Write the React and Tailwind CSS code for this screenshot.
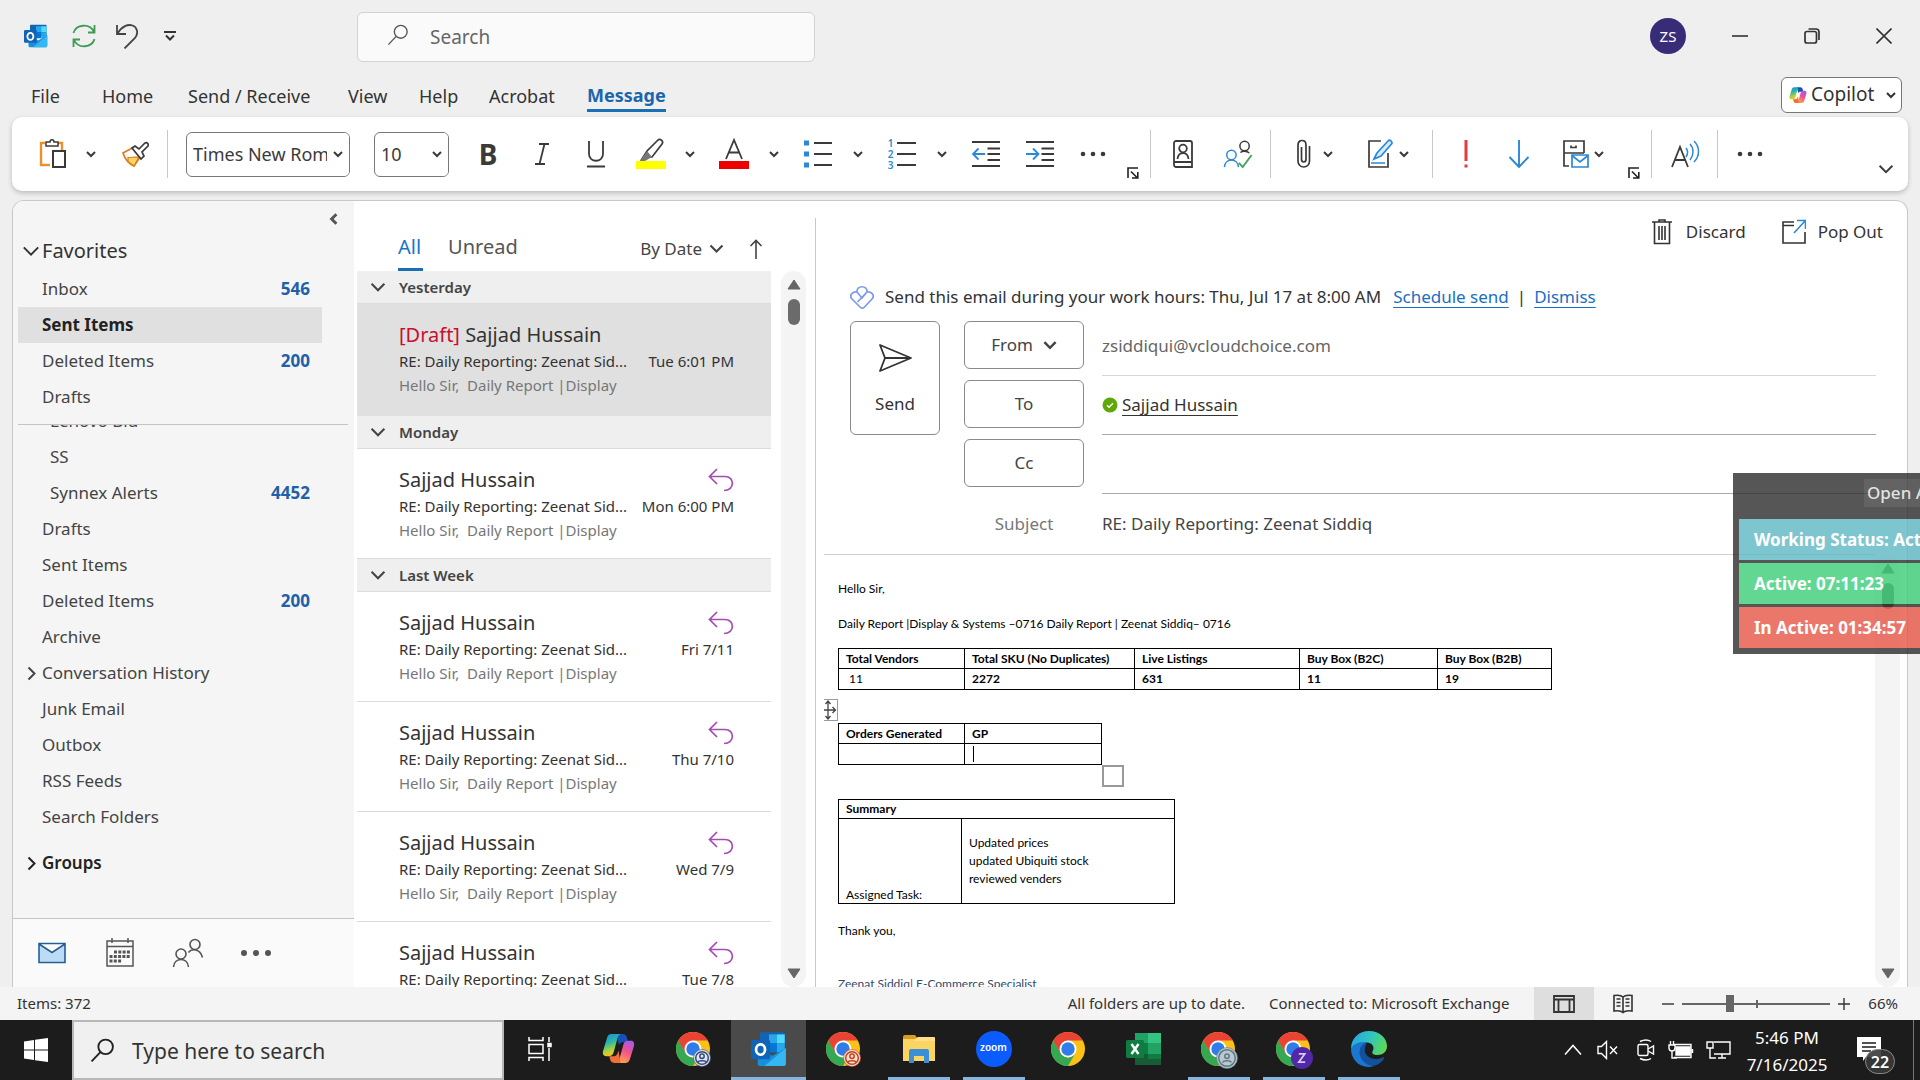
import React from "react";

/* ---------- shared icons ---------- */
const Svg = ({ w = 28, h, box, children, className = "", sw = 1.5 }) => (
  <svg
    width={w}
    height={h ?? w}
    viewBox={box ?? `0 0 ${w} ${h ?? w}`}
    fill="none"
    stroke="currentColor"
    strokeWidth={sw}
    aria-hidden="true"
    className={"shrink-0 " + className}
  >
    {children}
  </svg>
);

const Chevron = ({ w = 10, sw = 2, className = "" }) => (
  <Svg w={w} h={w} box="0 0 10 10" sw={sw} className={className}>
    <path d="M1 3l4 4 4-4" />
  </Svg>
);

const Magnifier = ({ w = 24, sw = 1.5, className = "" }) => (
  <Svg w={w} box="0 0 24 24" sw={sw} className={className}>
    <circle cx="15" cy="8.500" r="7" />
    <path d="M10 13.500L1.500 22.500" />
  </Svg>
);

const Outlook = ({ w }) => (
  <Svg w={w} box="0 0 32 32" sw={0}>
    <path fill="#1066b5" d="M9 1h20a1 1 0 0 1 1 1v14H8V2a1 1 0 0 1 1-1z" />
    <path fill="#28a8ea" d="M16 3h7v8h-7z" />
    <path fill="#50d9ff" d="M23 3h7v8h-7z" />
    <path fill="#0078d4" d="M16 11h7v8h-7z" />
    <path fill="#28a8ea" d="M23 11h7v8h-7z" />
    <path fill="#1490df" d="M6 16l13 6 12-7v14a2 2 0 0 1-2 2H8a2 2 0 0 1-2-2z" />
    <path fill="#35b8f1" d="M31 15v14a2 2 0 0 1-2 2H12z" />
    <rect x="0" y="8" width="17" height="17" rx="1.500" fill="#0f64b8" />
    <ellipse cx="8.500" cy="16.500" rx="4" ry="4.600" stroke="#fff" strokeWidth="2.400" />
  </Svg>
);

const CopilotLogo = ({ w }) => (
  <Svg w={w} box="0 0 32 32" sw={0}>
    <defs>
      <linearGradient id="cpA" x1="0" y1="0" x2="0.3" y2="1">
        <stop offset="0" stopColor="#1a8ae8" />
        <stop offset="0.45" stopColor="#2bb8a5" />
        <stop offset="0.8" stopColor="#b5d334" />
        <stop offset="1" stopColor="#f5c026" />
      </linearGradient>
      <linearGradient id="cpB" x1="0.7" y1="0" x2="0.3" y2="1">
        <stop offset="0" stopColor="#a55be8" />
        <stop offset="0.45" stopColor="#f0508f" />
        <stop offset="1" stopColor="#ffa34d" />
      </linearGradient>
    </defs>
    <path fill="#1650b8" d="M14 2h6c2.500 0 3.500 1.500 4 3l1.500 5H20c-2 0-3 1-3.500 3z" />
    <path
      fill="url(#cpA)"
      d="M9 2h9c-2 1-2.800 3-3.500 6l-3 11c-.8 3-2 4.500-4.500 4.500H4C1.500 23.500.3 21.500 1 18.500L4.500 7C5.500 3.500 6.500 2 9 2z"
    />
    <path
      fill="url(#cpB)"
      d="M23 30h-9c2-1 2.800-3 3.500-6l3-11c.8-3 2-4.500 4.500-4.500h3c2.500 0 3.700 2 3 5L27.500 25c-1 3.500-2 5-4.500 5z"
    />
    <path fill="#f0703c" d="M18 30h-6c-2.500 0-3.500-1.500-4-3l-1-3.500h3.500c2.500 0 4-1 4.800-3.500l.7-2z" />
  </Svg>
);

const Chrome = ({ children }) => (
  <Svg w={40} box="0 0 40 40" sw={0}>
    <circle cx="19" cy="20" r="17" fill="#fbc116" />
    <path fill="#ea4335" d="M4.280 11.500A17 17 0 0 1 33.720 11.500H19L11.640 24.250z" />
    <path fill="#34a853" d="M4.280 11.500A17 17 0 0 0 19 37L26.360 24.250A8.500 8.500 0 0 1 11.640 24.250z" />
    <path fill="#ea4335" d="M4.280 11.500L11.640 24.250L12 15L19 11.500z" />
    <circle cx="19" cy="20" r="8.500" fill="#fff" />
    <circle cx="19" cy="20" r="6.700" fill="#2f7de9" />
    {children}
  </Svg>
);

const PersonBadge = ({ bg, fg, r = 8.5 }) => (
  <g>
    <circle cx="28" cy="29" r={r} fill={bg} stroke={fg} strokeWidth="0.6" />
    <circle cx="28" cy="29" r={r - 2.2} stroke={fg} strokeWidth="1.500" />
    <circle cx="28" cy="27.200" r="2.200" stroke={fg} strokeWidth="1.500" />
    <path d="M23.800 33.500c.7-2.400 7.700-2.400 8.400 0" stroke={fg} strokeWidth="1.500" />
  </g>
);

const People = ({ w = 32, check }) => (
  <Svg w={w} box="0 0 32 32" sw={1.6}>
    <circle cx="23" cy="7.500" r="5" />
    {!check && <path d="M16.500 15.500c3-4 11.500-4.500 14 5" />}
    {check && <path d="M18.500 14.500c2-2 7-2.200 9.500.5" />}
    <g stroke={check ? "#2b88d8" : "currentColor"}>
      <circle cx="9" cy="17" r="5" />
      <path d="M1.500 30c.8-10 14.200-10 15 0" />
    </g>
    {check && <path d="M17 25.500l4 4.500 9.500-13" stroke="#3fa35a" strokeWidth="2" />}
  </Svg>
);

const Dots = ({ className = "", r = 2.3 }) => (
  <Svg w={28} h={8} sw={0} className={className}>
    <g fill="currentColor">
      <circle cx="4" cy="4" r={r} />
      <circle cx="14" cy="4" r={r} />
      <circle cx="24" cy="4" r={r} />
    </g>
  </Svg>
);

/* ---------- ribbon ---------- */
const Tool = ({ label, className, children }) => (
  <button
    type="button"
    aria-label={label}
    className={"flex h-12 shrink-0 items-center justify-center " + className}
  >
    {children}
  </button>
);
const Divider = ({ className }) => <div className={"h-12 w-px shrink-0 bg-[#c8c8c8] " + className} />;

const Launcher = ({ className }) => (
  <button
    type="button"
    aria-label="More settings"
    className={"flex w-4 shrink-0 justify-center self-end pb-3 text-[#222] " + className}
  >
    <Svg w={12} h={12} sw={1.6}>
      <path d="M1 11V1h10M4 4.500l6 6M10.800 5v6H5" />
    </Svg>
  </button>
);

const Combo = ({ label, value, className }) => (
  <div className={"relative h-[45px] shrink-0 overflow-hidden rounded-md border border-[#777] bg-white " + className}>
    <select
      aria-label={label}
      defaultValue={value}
      className="h-full w-full appearance-none bg-transparent pt-px outline-none"
    >
      <option>{value}</option>
    </select>
    <div className="pointer-events-none absolute inset-y-0 right-0 flex w-[22px] items-center justify-end bg-white">
      <Chevron className="mr-1.5" />
    </div>
  </div>
);

const Outdent = ({ flip }) => (
  <Svg w={28} sw={1.8}>
    <path d="M0 2h28M15.500 8.500H28M15.500 14H28M15.500 20H28M0 26h28" />
    {flip ? (
      <path d="M0 14h12M7 8.500l5.500 5.500L7 19.500" stroke="#2b88d8" />
    ) : (
      <path d="M13 14H1M6.500 8.500L1 14l5.500 5.500" stroke="#2b88d8" />
    )}
  </Svg>
);

function Ribbon() {
  return (
    <div
      role="toolbar"
      aria-label="Message ribbon"
      className="mx-3 flex h-[74px] shrink-0 items-center rounded-[10px] bg-white text-[#3b3a39] shadow-[0_2px_5px_rgba(0,0,0,0.22)]"
    >
      <Tool label="Paste" className="ml-[21px] w-10">
        <Svg w={28} h={30} sw={2}>
          <path d="M6 4H2v22h9M19 4h4v7" stroke="#e8912d" strokeWidth="2.400" />
          <path d="M7 7V3h4c0-3 4-3 4 0h4v4z" fill="#fff" strokeWidth="1.500" />
          <rect x="14" y="12" width="12" height="16" fill="#fff" />
        </Svg>
      </Tool>
      <Tool label="Paste options" className="ml-2 w-5">
        <Chevron />
      </Tool>
      <Tool label="Format painter" className="ml-3.5 w-10">
        <Svg w={28} h={28} sw={1.7}>
          <path d="M2 13l9-5 8 9-6 9C8 24 4 19 2 13z" fill="#fff" stroke="#e07b1c" />
          <path d="M7 17.500l11-.5-5 9-6-4.500z" fill="#fdd663" stroke="#e07b1c" strokeWidth="1.200" />
          <path d="M11 8l3-2 4 3 6-6c2-1 4 1 3 3l-6 6 2 4-3 3z" fill="#fff" />
        </Svg>
      </Tool>
      <Divider className="ml-3" />
      <Combo label="Font" value="Times New Roman" className="ml-[18px] w-[164px] pl-1.5 text-[18px]" />
      <Combo label="Font size" value="10" className="ml-6 w-[75px] pl-1.5 text-[18px]" />
      <Tool label="Bold" className="ml-[19px] w-10 text-[28px] font-bold">B</Tool>
      <Tool label="Italic" className="ml-3.5 w-10">
        <Svg w={16} h={24} sw={1.8}>
          <path d="M5 2h10M1 22h10M10.500 2l-5 20" />
        </Svg>
      </Tool>
      <Tool label="Underline" className="ml-3.5 w-10">
        <Svg w={20} h={28} sw={1.8}>
          <path d="M3 1v13c0 9 14 9 14 0V1M1 26.500h18" />
        </Svg>
      </Tool>
      <Tool label="Text highlight color" className="ml-[15px] w-10">
        <Svg w={30} h={32} sw={1.7}>
          <path d="M0 23h30v8H0z" fill="#ffff00" stroke="none" />
          <path d="M6 21l4-2 6 0 10-13c2-3-2-6-4.500-3.500L11 13z" fill="#fff" />
          <path d="M4 23l7-10 5 6-7 4z" fill="#777" stroke="none" />
        </Svg>
      </Tool>
      <Tool label="Highlight options" className="ml-[9px] w-5"><Chevron /></Tool>
      <Tool label="Font color" className="ml-3.5 w-10">
        <Svg w={30} h={32} sw={1.8}>
          <path d="M0 23h30v8H0z" fill="#ee0000" stroke="none" />
          <path d="M7 21l8-19 8 19M10 14.500h10" />
        </Svg>
      </Tool>
      <Tool label="Font color options" className="ml-2.5 w-5"><Chevron /></Tool>
      <Tool label="Bullets" className="ml-3.5 w-10">
        <Svg w={28} sw={1.8}>
          <path d="M10 3h18M10 14h18M10 25h18" />
          <path d="M0 .5h5v5H0zM0 11.500h5v5H0zM0 22.500h5v5H0z" fill="#2b88d8" stroke="none" />
        </Svg>
      </Tool>
      <Tool label="Bullet options" className="ml-2.5 w-5"><Chevron /></Tool>
      <Tool label="Numbering" className="ml-3.5 w-10">
        <span className="flex items-center gap-1">
          <span className="flex flex-col text-[10px] leading-[11px] font-semibold text-[#2b88d8]">
            <span>1</span>
            <span>2</span>
            <span>3</span>
          </span>
          <Svg w={19} h={28} sw={1.8}>
            <path d="M0 3h19M0 14h19M0 25h19" />
          </Svg>
        </span>
      </Tool>
      <Tool label="Numbering options" className="ml-2.5 w-5"><Chevron /></Tool>
      <Tool label="Decrease indent" className="ml-3.5 w-10"><Outdent /></Tool>
      <Tool label="Increase indent" className="ml-3.5 w-10"><Outdent flip /></Tool>
      <Tool label="More formatting" className="ml-[13px] w-10"><Dots /></Tool>
      <Launcher className="ml-3" />
      <Divider className="ml-[9px]" />
      <Tool label="Address book" className="ml-3 w-10">
        <Svg w={20} h={28} sw={1.8}>
          <path d="M3 1h14a2 2 0 0 1 2 2v24H3a2 2 0 0 1-2-2V3a2 2 0 0 1 2-2zM1 22h18" />
          <circle cx="10" cy="8.500" r="3.800" />
          <path d="M4.500 19c.5-8 10.500-8 11 0" />
        </Svg>
      </Tool>
      <Tool label="Check names" className="ml-[15px] w-10"><People w={30} check /></Tool>
      <Divider className="ml-3" />
      <Tool label="Attach file" className="ml-[19px] w-7">
        <Svg w={14} h={30} sw={1.7}>
          <path d="M12.500 7v15c0 8-11.500 8-11.500 0V6c0-6 8-6 8 0v14c0 4-4.500 4-4.500 0V8" />
        </Svg>
      </Tool>
      <Tool label="Attach options" className="w-5"><Chevron /></Tool>
      <Tool label="Signature" className="ml-7 w-7">
        <Svg w={26} h={30} sw={1.7}>
          <path d="M14 2H2v26h19V14" />
          <path d="M4 24h14M7 20l3-6L21 2c2-2 5 1 3.500 3L14 17z" fill="#d6ebfa" stroke="#2b88d8" />
        </Svg>
      </Tool>
      <Tool label="Signature options" className="ml-0.5 w-4"><Chevron /></Tool>
      <Divider className="ml-5" />
      <Tool label="High importance" className="ml-[13px] w-10">
        <Svg w={6} h={28} sw={0}>
          <path d="M1.500 0h3v21h-3zM1.500 24.500h3v3h-3z" fill="#e8383d" />
        </Svg>
      </Tool>
      <Tool label="Low importance" className="ml-[13px] w-10">
        <Svg w={22} h={28} sw={1.9}>
          <path d="M11 0v27M1.500 17L11 27l9.500-10" stroke="#2b88d8" />
        </Svg>
      </Tool>
      <Tool label="Save sent item to" className="ml-[23px] w-7">
        <Svg w={26} h={30} sw={1.7}>
          <path d="M21 14V2H1v25h5M1 14h20M8 6.500v2h5v-2" />
          <path d="M9 16h16v12H9zM9 16.500l8 6.500 8-6.500" fill="#fff" stroke="#2b88d8" />
        </Svg>
      </Tool>
      <Tool label="Save options" className="ml-px w-4"><Chevron /></Tool>
      <Launcher className="ml-[19px]" />
      <Divider className="ml-[9px]" />
      <Tool label="Read aloud" className="ml-[13px] w-10">
        <Svg w={30} h={30} sw={1.8}>
          <path d="M2 28l8-20 8 20M5 21h10" />
          <path d="M16 9c2 2.500 2 6 0 9M20 5c4 4 4 11 0 16M24 2c6 6 6 15 0 21" stroke="#2b88d8" strokeWidth="1.500" />
        </Svg>
      </Tool>
      <Divider className="ml-3" />
      <Tool label="More commands" className="ml-3 w-10"><Dots /></Tool>
      <Tool label="Ribbon display options" className="mr-3.5 ml-auto w-4 self-end">
        <Chevron w={16} sw={1.2} className="mt-1" />
      </Tool>
    </div>
  );
}

/* ---------- folder pane ---------- */
const Folder = ({ name, count, indent, selected, caret, bold }) => (
  <button
    type="button"
    className={
      "ml-[5px] flex h-9 w-[304px] shrink-0 items-center text-left text-[17px] " +
      (selected ? "bg-[#e0e0e0] font-bold text-[#222]" : bold ? "font-semibold text-[#222]" : "text-[#444]")
    }
  >
    <span className={"flex shrink-0 justify-end pr-[3px] " + (indent ? "w-8" : "w-6")}>
      {caret && <Chevron w={15} sw={1.3} className="-rotate-90" />}
    </span>
    <span className="grow">{name}</span>
    {count && <span className="mr-3 font-bold text-[#215fa8]">{count}</span>}
  </button>
);

function Folders() {
  return (
    <nav aria-label="Folders" className="flex w-[341px] shrink-0 flex-col bg-[#f5f5f5]">
      <div className="flex h-[30px] shrink-0 items-end justify-end pr-3.5 pb-1.5">
        <button type="button" aria-label="Collapse folder pane" className="text-[#555]">
          <Chevron w={12} sw={2.4} className="rotate-90" />
        </button>
      </div>
      <button type="button" className="flex h-10 shrink-0 items-center pl-[9px] text-[20px] text-[#333]">
        <Chevron w={18} sw={1.1} className="mr-0.5" />
        Favorites
      </button>
      <Folder name="Inbox" count="546" />
      <Folder name="Sent Items" selected />
      <Folder name="Deleted Items" count="200" />
      <Folder name="Drafts" />
      <div className="mr-1.5 ml-[5px] h-2.5 shrink-0 border-b border-[#c4c4c4]" />
      <div className="flex min-h-0 grow flex-col overflow-hidden">
        <div className="-mt-[22px] flex flex-col">
          <Folder name="Lenovo Bid" indent />
          <Folder name="SS" indent />
          <Folder name="Synnex Alerts" count="4452" indent />
          <Folder name="Drafts" />
          <Folder name="Sent Items" />
          <Folder name="Deleted Items" count="200" />
          <Folder name="Archive" />
          <Folder name="Conversation History" caret />
          <Folder name="Junk Email" />
          <Folder name="Outbox" />
          <Folder name="RSS Feeds" />
          <Folder name="Search Folders" />
          <div className="h-2.5" />
          <Folder name="Groups" caret bold />
        </div>
      </div>
      <div className="flex h-[69px] shrink-0 items-center border-t border-[#c4c4c4] bg-[#fafafa] pl-[25px] text-[#555]">
        <button type="button" aria-label="Mail" className="w-[30px]">
          <Svg w={28} h={22} sw={1.6}>
            <path d="M1 1.500h26v19H1zM1 2l13 8.500L27 2" fill="#bcdcf5" stroke="#235f94" />
          </Svg>
        </button>
        <button type="button" aria-label="Calendar" className="ml-[38px] w-[30px]">
          <Svg w={28} h={30} sw={1.5}>
            <path d="M1 3h26v25H1zM1 8.500h26M6 0v5M22 0v5" />
            <path d="M8 14h17M3.500 18.500h21.500M3.500 23h12" strokeWidth="3" strokeDasharray="3 1.300" />
          </Svg>
        </button>
        <button type="button" aria-label="People" className="ml-9">
          <People w={32} />
        </button>
        <button type="button" aria-label="More apps" className="ml-9">
          <Svg w={32} h={8} sw={0}>
            <path stroke="currentColor" strokeWidth="6" strokeLinecap="round" d="M4 4h0M16 4h0M28 4h0" />
          </Svg>
        </button>
      </div>
    </nav>
  );
}

/* ---------- message list ---------- */
const Group = ({ name }) => (
  <div className="flex h-[33px] shrink-0 items-center border-b border-[#dcdcdc] bg-[#efefef] pl-[13px] text-[15px] font-semibold text-[#444]">
    <Chevron w={16} sw={1.3} className="mr-[13px]" />
    {name}
  </div>
);

const Message = ({ date, draft }) => (
  <button
    type="button"
    className={
      "flex w-full shrink-0 flex-col pr-[37px] pl-[42px] text-left " +
      (draft ? "h-28 bg-[#e0e0e0] pt-[18px]" : "h-[110px] border-b border-[#dcdcdc] pt-[18px]")
    }
  >
    <span className="flex h-[26px] w-full items-center justify-between text-[20px] text-[#333]">
      <span>
        {draft && <span className="text-[#c8102e]">[Draft] </span>}
        Sajjad Hussain
      </span>
      {!draft && (
        <Svg w={26} h={26} sw={1.700} className="text-[#a64bb5]">
          <path d="M9 2L1.500 9.500 9 17M2 9.500h15c10 0 10 14-1 14" />
        </Svg>
      )}
    </span>
    <span className="flex h-[26px] w-full items-center justify-between text-[15px] text-[#333]">
      <span>RE: Daily Reporting: Zeenat Sid...</span>
      <span>{date}</span>
    </span>
    <span className="flex h-[22px] items-center text-[15px] whitespace-pre text-[#777]">
      {"Hello Sir,  Daily Report |Display"}
    </span>
  </button>
);

const ScrollTrack = ({ className, thumb }) => (
  <div className={"flex w-[25px] shrink-0 flex-col items-center rounded-full bg-[#f4f4f4] text-[#666] " + className}>
    <svg width="14" height="12" viewBox="0 0 14 12" className="mt-2 shrink-0" aria-hidden="true">
      <path d="M7 1l6 9H1z" fill="currentColor" stroke="currentColor" strokeLinejoin="round" />
    </svg>
    <div className={"mt-2 w-3 shrink-0 rounded-full bg-[#6b6b6b] " + thumb} />
    <svg width="14" height="12" viewBox="0 0 14 12" className="mt-auto mb-2 shrink-0" aria-hidden="true">
      <path d="M7 11l6-9H1z" fill="currentColor" stroke="currentColor" strokeLinejoin="round" />
    </svg>
  </div>
);

function MessageList() {
  return (
    <section aria-label="Messages" className="flex w-[461px] shrink-0 flex-col pl-[3px]">
      <div className="flex h-[70px] shrink-0 items-end pl-[41px] text-[20px] text-[#555]">
        <button type="button" className="mr-[25px] border-b-[3px] border-[#1a6fb5] pr-0.5 pb-1.5 text-[#1a73c8]">
          All
        </button>
        <button type="button" className="border-b-[3px] border-transparent pb-1.5">Unread</button>
        <button type="button" className="mr-[25px] ml-auto flex items-center gap-[7px] pb-2.5 text-[17px] text-[#444]">
          By Date <Chevron w={15} sw={1.400} />
        </button>
        <button type="button" aria-label="Sort ascending" className="mr-[52px] pb-3">
          <Svg w={14} h={20} sw={1.600} className="text-[#444]">
            <path d="M7 20V1.500M1.500 7L7 1.500 12.500 7" />
          </Svg>
        </button>
      </div>
      <div className="flex min-h-0 grow">
        <div className="flex w-[414px] shrink-0 flex-col overflow-hidden">
          <Group name="Yesterday" />
          <Message date="Tue 6:01 PM" draft />
          <Group name="Monday" />
          <Message date="Mon 6:00 PM" />
          <Group name="Last Week" />
          <Message date="Fri 7/11" />
          <Message date="Thu 7/10" />
          <Message date="Wed 7/9" />
          <Message date="Tue 7/8" />
        </div>
        <ScrollTrack className="ml-2.5" thumb="h-[26px]" />
      </div>
    </section>
  );
}

/* ---------- compose pane ---------- */
const FieldButton = ({ children }) => (
  <button
    type="button"
    className="flex h-12 w-[120px] shrink-0 items-center justify-center gap-2.5 rounded-md border border-[#8a8a8a] text-[17px] text-[#444]"
  >
    {children}
  </button>
);

const th = "border border-black pr-1 pl-[7px] text-left font-bold";

function Body() {
  return (
    <div
      aria-label="Message body"
      className="min-w-0 grow overflow-hidden pl-[14px] font-[Lato,sans-serif] text-[12px] leading-[18px] text-black"
    >
      <p className="mt-[25px]">Hello Sir,</p>
      <p className="mt-[17px]">Daily Report |Display &amp; Systems –0716 Daily Report | Zeenat Siddiq– 0716</p>
      <table className="mt-[15px] w-[713px] table-fixed border-collapse">
        <colgroup>
          <col className="w-[126px]" />
          <col className="w-[170px]" />
          <col className="w-[165px]" />
          <col className="w-[138px]" />
          <col className="w-[114px]" />
        </colgroup>
        <thead>
          <tr className="h-5">
            <th className={th}>Total Vendors</th>
            <th className={th}>Total SKU (No Duplicates)</th>
            <th className={th}>Live Listings</th>
            <th className={th}>Buy Box (B2C)</th>
            <th className={th}>Buy Box (B2B)</th>
          </tr>
        </thead>
        <tbody>
          <tr className="h-[21px]">
            <td className="border border-black pl-2.5">11</td>
            <td className={th}>2272</td>
            <td className={th}>631</td>
            <td className={th}>11</td>
            <td className={th}>19</td>
          </tr>
        </tbody>
      </table>
      <div className="relative mt-[33px] w-[264px]">
        <div className="absolute -top-6 -left-[15px] h-[22px] w-[15px] overflow-hidden border-y border-r border-[#999] text-[#444]">
          <Svg w={14} h={20} sw={1.300}>
            <path d="M5 1v18M0 10h12M2.500 4L5 1l2.500 3M2.500 16L5 19l2.500-3M9.500 7l3 3-3 3" />
          </Svg>
        </div>
        <table className="w-[264px] table-fixed border-collapse">
          <thead>
            <tr className="h-5">
              <th className={th + " w-[126px]"}>Orders Generated</th>
              <th className={th}>GP</th>
            </tr>
          </thead>
          <tbody>
            <tr className="h-[21px]">
              <td className={th} />
              <td className={th}>
                <div className="ml-px h-4 w-px bg-black" />
              </td>
            </tr>
          </tbody>
        </table>
        <div className="absolute top-full left-full h-[22px] w-[22px] border-2 border-[#999] bg-white" />
      </div>
      <table className="mt-[34px] w-[337px] table-fixed border-collapse">
        <colgroup>
          <col className="w-[123px]" />
          <col />
        </colgroup>
        <tbody>
          <tr className="h-[19px]">
            <th colSpan={2} className={th}>Summary</th>
          </tr>
          <tr className="h-[85px]">
            <td className="border border-black pl-[7px] align-bottom leading-4">Assigned Task:</td>
            <td className="border border-black pl-[7px]">
              Updated prices
              <br />
              updated Ubiquiti stock
              <br />
              reviewed venders
            </td>
          </tr>
        </tbody>
      </table>
      <p className="mt-[18px]">Thank you,</p>
      <p className="mt-[35px] text-[#2f4a6b]">Zeenat Siddiq| E-Commerce Specialist</p>
    </div>
  );
}

function Compose() {
  return (
    <section aria-label="Compose" className="relative flex min-w-0 grow flex-col">
      <div className="absolute top-[17px] bottom-0 left-0 w-px bg-[#c8c8c8]" />
      <div className="flex h-[62px] shrink-0 items-center justify-end gap-3 pr-6 text-[17px] text-[#333]">
        <button type="button" className="flex items-center gap-3.5">
          <Svg w={20} h={26} sw={1.600} className="text-[#333]">
            <path d="M0 3h20M7 3V1h6v2M2.500 3v21.500h15V3M7 7v14M10 7v14M13 7v14" />
          </Svg>
          Discard
        </button>
        <button type="button" className="ml-6 flex items-center gap-3">
          <Svg w={24} h={26} sw={1.600}>
            <path d="M12 3H1v21h22V13M1 6.500h11" />
            <path d="M12 14L23 2M15 1.500h8.500V10" stroke="#2b88d8" />
          </Svg>
          Pop Out
        </button>
      </div>

      <div className="mt-[22px] flex h-6 shrink-0 items-center pl-[35px] text-[17px] text-[#333]">
        <Svg w={24} sw={1.700} className="mr-[11px] text-[#7b9bea]">
          <path d="M7 7c-1-7 11-7 10 0l-5 6zM7 7c-5-1-8 4-5 7l8 8c1.500 1.500 3 1.500 4.500 0l7.500-8c3-3 0-8-5-7L7.500 17M7 7l5 6" />
        </Svg>
        Send this email during your work hours: Thu, Jul 17 at 8:00 AM
        <a href="#schedule" className="ml-3 text-[#1a6fc0] underline underline-offset-4">Schedule send</a>
        <span className="mx-2">|</span>
        <a href="#dismiss" className="text-[#1a6fc0] underline underline-offset-4">Dismiss</a>
      </div>

      <div className="mt-3 flex shrink-0 items-start pr-[31px] pl-[35px]">
        <button
          type="button"
          className="flex h-[114px] w-[90px] shrink-0 flex-col items-center gap-5 rounded-md border border-[#8a8a8a] pt-[22px] text-[17px] leading-6 text-[#333]"
        >
          <Svg w={34} h={28} sw={1.800}>
            <path d="M2 1l31 13L2 27l5-13zM7 14h26" strokeLinejoin="round" />
          </Svg>
          Send
        </button>
        <div className="ml-6 flex min-w-0 grow flex-col text-[17px] text-[#444]">
          <div className="flex h-[59px] gap-[18px]">
            <FieldButton>
              From <Chevron w={14} sw={1.800} />
            </FieldButton>
            <input
              aria-label="From address"
              defaultValue="zsiddiqui@vcloudchoice.com"
              className="h-[55px] min-w-0 grow border-b border-[#d8d8d8] pb-1.5 text-[#666] outline-none"
            />
          </div>
          <div className="flex h-[59px] gap-[18px]">
            <FieldButton>To</FieldButton>
            <div className="flex h-[55px] min-w-0 grow items-center border-b border-[#aaa] pb-1">
              <Svg w={16} sw={0} className="mr-1">
                <circle cx="8" cy="8" r="7.500" fill="#5fa80a" />
                <path d="M5 8.200l2 2 4-4" stroke="#fff" strokeWidth="1.400" />
              </Svg>
              <a href="#recipient" className="text-[#333] underline underline-offset-4">Sajjad Hussain</a>
            </div>
          </div>
          <div className="flex h-[59px] gap-[18px]">
            <FieldButton>Cc</FieldButton>
            <input
              aria-label="Cc"
              className="h-[55px] min-w-0 grow border-b border-[#aaa] pb-1 outline-none"
            />
          </div>
          <div className="flex h-14 items-center gap-[18px] pb-1">
            <label htmlFor="subject" className="w-[120px] text-center text-[#777]">Subject</label>
            <input
              id="subject"
              defaultValue="RE: Daily Reporting: Zeenat Siddiq"
              className="min-w-0 grow text-[#444] outline-none"
            />
          </div>
        </div>
      </div>
      <div className="mr-[31px] ml-[9px] h-px shrink-0 bg-[#d0d0d0]" />
      <div className="flex min-h-0 grow pl-[9px]">
        <Body />
        <ScrollTrack className="mr-[7px]" thumb="h-[26px]" />
      </div>
    </section>
  );
}

/* ---------- window chrome ---------- */
const tabs = [
  ["File", "w-[71px]"],
  ["Home", "w-[86px]"],
  ["Send / Receive", "w-40"],
  ["View", "w-[71px]"],
  ["Help", "w-[70px]"],
  ["Acrobat", "w-[98px]"],
];

function TitleBar() {
  return (
    <header className="flex h-[72px] shrink-0 items-center pl-6 text-[#333]">
      <Outlook w={24} />
      <button type="button" aria-label="Send and receive all" className="ml-6 text-[#3c9c50]">
        <Svg w={24} h={24} sw={1.800}>
          <path d="M1.500 9C4 0 18-1 22 8M22.500 1v7.500H16M22.500 15C20 24 6 25 2 16M1.500 23v-7.500H8" />
        </Svg>
      </button>
      <button type="button" aria-label="Undo" className="ml-5 text-[#444]">
        <Svg w={22} h={26} sw={1.800}>
          <path d="M1 2v9h9M1.500 10.500C6 3 12 1 16.500 2.500S23 10 19 15L8.500 25.500" />
        </Svg>
      </button>
      <button type="button" aria-label="Customize toolbar" className="ml-[26px]">
        <Svg w={12} h={12} sw={2}>
          <path d="M0 2h12M2 5.500L6 9.500l4-4" />
        </Svg>
      </button>
      <label className="mt-px ml-[181px] flex h-[50px] w-[458px] items-center rounded-md border border-[#d2d2d2] bg-[#fafafa] pl-[29px]">
        <Magnifier w={22} className="-mt-1 text-[#555]" />
        <input
          aria-label="Search"
          placeholder="Search"
          className="mt-0.5 ml-[21px] min-w-0 grow bg-transparent text-[19px] outline-none placeholder:text-[#666]"
        />
      </label>
      <button
        type="button"
        aria-label="Account"
        className="ml-auto flex h-9 w-9 items-center justify-center rounded-full bg-[#382c79] text-[15px] text-white"
      >
        ZS
      </button>
      <button type="button" aria-label="Minimize" className="ml-[46px]">
        <Svg w={16} sw={1.600}><path d="M0 8h16" /></Svg>
      </button>
      <button type="button" aria-label="Restore" className="ml-14">
        <Svg w={16} sw={1.700}>
          <rect x="1" y="3.500" width="11.500" height="11.500" rx="2" />
          <path d="M4.500 1H12a3 3 0 0 1 3 3v8" />
        </Svg>
      </button>
      <button type="button" aria-label="Close" className="mr-7 ml-14">
        <Svg w={16} sw={1.600}><path d="M.5.5l15 15M15.500.5l-15 15" /></Svg>
      </button>
    </header>
  );
}

function MenuTabs() {
  return (
    <div className="flex h-[45px] shrink-0 items-center pl-[31px] text-[18px] text-[#333]">
      {tabs.map(([name, width]) => (
        <button key={name} type="button" className={"shrink-0 pt-[3px] text-left whitespace-nowrap " + width}>
          {name}
        </button>
      ))}
      <button type="button" className="mt-[5px] border-b-[3px] border-[#1a6fb5] font-bold text-[#1a66ad]">
        Message
      </button>
      <button
        type="button"
        className="mr-[18px] ml-auto flex h-9 w-[121px] items-center rounded-md border border-[#777] bg-white pl-[7px] text-[19px]"
      >
        <CopilotLogo w={18} />
        <span className="ml-1 grow text-left">Copilot</span>
        <Chevron w={10} className="mr-[5px]" />
      </button>
    </div>
  );
}

function StatusBar() {
  return (
    <footer className="flex h-[33px] shrink-0 items-center bg-[#f4f4f4] pl-[17px] text-[15px] text-[#333]">
      <span>Items: 372</span>
      <span className="mr-6 ml-auto">All folders are up to date.</span>
      <span className="mr-[25px]">Connected to: Microsoft Exchange</span>
      <button type="button" aria-label="Normal view" className="flex h-full w-[60px] items-center justify-center bg-[#dedede]">
        <Svg w={22} h={18} sw={1.800}>
          <path d="M1 1h20v16H1zM1 4.500h20M5.500 4.500V17M16.500 4.500V17" />
        </Svg>
      </button>
      <button type="button" aria-label="Reading view" className="flex w-[58px] justify-center">
        <Svg w={20} h={20} sw={1.600}>
          <path d="M10 3C8 1 4 1 1 1.500V17c3-.5 7-.5 9 1.500 2-2 6-2 9-1.500V1.500C16 1 12 1 10 3v15.500M3.500 5h4M3.500 8.500h4M3.500 12h4M12.500 5h4M12.500 8.500h4M12.500 12h4" />
        </Svg>
      </button>
      <button type="button" aria-label="Zoom out" className="ml-2.5">
        <Svg w={12} sw={1.400}><path d="M0 6h12" /></Svg>
      </button>
      <div className="relative mx-2 flex h-full w-[148px] items-center">
        <div className="absolute left-1/2 h-2 w-0.5 bg-[#666]" />
        <input
          type="range"
          aria-label="Zoom level"
          min="0"
          max="100"
          defaultValue="31"
          className="relative h-[17px] w-full appearance-none bg-transparent [&::-webkit-slider-runnable-track]:h-[17px] [&::-webkit-slider-runnable-track]:bg-[linear-gradient(#666,#666)] [&::-webkit-slider-runnable-track]:bg-[length:100%_2px] [&::-webkit-slider-runnable-track]:bg-center [&::-webkit-slider-runnable-track]:bg-no-repeat [&::-webkit-slider-thumb]:h-[17px] [&::-webkit-slider-thumb]:w-2 [&::-webkit-slider-thumb]:appearance-none [&::-webkit-slider-thumb]:bg-[#666]"
        />
      </div>
      <button type="button" aria-label="Zoom in">
        <Svg w={12} sw={1.400}><path d="M0 6h12M6 0v12" /></Svg>
      </button>
      <span className="mr-[22px] ml-[18px]">66%</span>
    </footer>
  );
}

/* ---------- taskbar ---------- */
const AppButton = ({ label, running, active, children }) => (
  <button
    type="button"
    aria-label={label}
    className={"flex h-full w-[75px] shrink-0 flex-col items-center " + (active ? "bg-[#4a4a4a]" : "")}
  >
    <span className="flex grow items-center justify-center">{children}</span>
    <span className={"h-[3px] " + (active ? "w-full bg-[#84b6e0]" : running ? "w-[62px] bg-[#84b6e0]" : "w-0")} />
  </button>
);

function Taskbar() {
  return (
    <div className="flex h-[60px] shrink-0 items-center bg-[#1c1c1c] text-white">
      <button type="button" aria-label="Start" className="flex w-[72px] justify-center">
        <Svg w={24} sw={0}>
          <path fill="#fff" d="M0 3.500l10-1.500v9.500H0zM11 1.800L24 0v11.500H11zM0 12.500h10V22L0 20.500zM11 12.500h13V24l-13-1.800z" />
        </Svg>
      </button>
      <label className="flex h-full w-[432px] shrink-0 items-center border-2 border-[#b8b8b8] bg-[#f0f0f0] pl-4 text-[#222]">
        <Magnifier w={25} sw={1.800} />
        <input
          aria-label="Search Windows"
          placeholder="Type here to search"
          className="mt-1 ml-[17px] min-w-0 grow bg-transparent text-[21px] outline-none placeholder:text-[#333]"
        />
      </label>
      <div className="flex h-full pl-0.5">
        <AppButton label="Task view">
          <Svg w={24} h={26} sw={1.500} className="mr-2">
            <path d="M1 1v3.500h14V1M1 25v-3.500h14V25M1 8.500h14v9H1zM21 1v5M21 12v13" />
            <path d="M20 7.500h3v3h-3z" fill="#fff" />
          </Svg>
        </AppButton>
        <AppButton label="Copilot"><CopilotLogo w={33} /></AppButton>
        <AppButton label="Chrome, profile 1">
          <Chrome><PersonBadge bg="#dfe6f5" fg="#3a4a78" /></Chrome>
        </AppButton>
        <AppButton label="Outlook" active running><Outlook w={36} /></AppButton>
        <AppButton label="Chrome, profile 2">
          <Chrome><PersonBadge bg="#fbe3d8" fg="#c4421a" /></Chrome>
        </AppButton>
        <AppButton label="File Explorer" running>
          <Svg w={34} h={30} sw={0}>
            <path d="M1 3a2 2 0 0 1 2-2h10l3 4H1z" fill="#d99e1f" />
            <path d="M1 5h32v22H1z" fill="#fcd462" />
            <path d="M13 5l3-2h16a1 1 0 0 1 1 1v3H12z" fill="#ffe08a" />
            <path d="M7 29V17a2 2 0 0 1 2-2h16a2 2 0 0 1 2 2v12h-5v-7H12v7z" fill="#3b8fd6" />
          </Svg>
        </AppButton>
        <AppButton label="Zoom" running>
          <span className="flex h-9 w-9 items-center justify-center rounded-full bg-[#0b5cff] pb-0.5 text-[10px] font-semibold">
            zoom
          </span>
        </AppButton>
        <AppButton label="Chrome"><Chrome /></AppButton>
        <AppButton label="Excel">
          <Svg w={36} h={34} sw={0}>
            <path d="M9 1h13v10H9z" fill="#21a366" />
            <path d="M22 1h13v10H22z" fill="#33c481" />
            <path d="M9 11h13v11H9z" fill="#107c41" />
            <path d="M22 11h13v11H22z" fill="#21a366" />
            <path d="M9 22h26v11H9z" fill="#185c37" />
            <path d="M22 22h13v5H22z" fill="#107c41" />
            <rect x="0" y="8" width="18" height="18" rx="1.500" fill="#107c41" />
            <path d="M5.500 12l7 10M12.500 12l-7 10" stroke="#fff" strokeWidth="2.400" />
          </Svg>
        </AppButton>
        <AppButton label="Chrome, profile 3" running>
          <Chrome><PersonBadge bg="#b9c7ce" fg="#5e7885" r={10.5} /></Chrome>
        </AppButton>
        <AppButton label="Chrome, profile Z" running>
          <Chrome>
            <circle cx="28" cy="29" r="11" fill="#5129a8" />
            <path d="M24.800 24.800h6l-6 8.400h6.400" stroke="#d7c8f5" strokeWidth="1.700" />
          </Chrome>
        </AppButton>
        <AppButton label="Edge" running>
          <Svg w={38} box="0 0 38 38" sw={0}>
            <defs>
              <linearGradient id="edgeTop" x1="0" y1="0.300" x2="1" y2="0.600">
                <stop offset="0" stopColor="#2aa5e0" />
                <stop offset="0.500" stopColor="#2fc6c0" />
                <stop offset="1" stopColor="#5fd94f" />
              </linearGradient>
            </defs>
            <path d="M1 19C1 8 9 1 19 1c11 0 18 7.500 18 15 0 6-4.500 9-9.500 9-4 0-6-1.500-5-3.500 3-5-1-9-5.500-9C9 12.500 3 16 1 19z" fill="url(#edgeTop)" />
            <path d="M1 19c2-5 9-8.500 16-6.500-5 2-7 7-5.500 12S18 35 24 36C12 40 1 31 1 19z" fill="#1b76d2" />
            <path d="M17 12.500c-6 1.500-8.500 7-7 13 1.800 6.500 9 11.500 15 10 4-1.200 7-3.500 9-7 .5-1-.5-1.500-1.500-1-9 4-19-.5-17.500-9 .3-2.500 1-4.500 2-6z" fill="#12519c" />
          </Svg>
        </AppButton>
      </div>

      <div className="ml-auto flex items-center">
        <button type="button" aria-label="Show hidden icons">
          <Svg w={18} h={12} sw={1.500}><path d="M1 10.500L9 1.500l8 9" /></Svg>
        </button>
        <Svg w={22} h={20} sw={1.400} className="ml-[15px]">
          <path d="M1 6.500h3.500L9.500 1.500v17l-5-5H1zM13 6.500l7 7.500M20 6.500L13 14" />
        </Svg>
        <Svg w={18} h={22} sw={1.400} className="ml-[18px]">
          <rect x="1" y="5.500" width="10" height="11" rx="1.500" />
          <path d="M11 10l5.500-3v8L11 12M3 2.500c4-2 8-2 11 0M3 19.500c4 2 8 2 11 0" />
        </Svg>
        <Svg w={26} h={20} sw={1.400} className="ml-[13px]">
          <path d="M8 7h14v8H8z" fill="#fff" />
          <path d="M6 4.500h17v13H6M24.500 9v4M2.500 1v4M5.500 1v4M1 5h6v3c0 4-6 4-6 0zM4 11v7h5" />
        </Svg>
        <Svg w={25} h={20} sw={1.400} className="ml-3">
          <path d="M8 2h16v12H8M12 18h8M16 14v4M1 2h6v6H1zM4 8v10h6" />
        </Svg>
        <div className="ml-3.5 w-[84px] pt-0.5 text-center text-[17px] leading-[27px] whitespace-nowrap">
          5:46 PM
          <br />
          7/16/2025
        </div>
        <button type="button" aria-label="Notifications" className="relative ml-[28px] h-9 w-[38px]">
          <Svg w={26} h={26} sw={0}>
            <path d="M0 0h24v20H9l-3 4v-4H0z" fill="#fff" />
            <path d="M5 6h14M5 10h14M5 14h9" stroke="#1c1c1c" strokeWidth="1.300" />
          </Svg>
          <span className="absolute right-0 -bottom-1.5 flex h-[25px] w-[30px] items-center justify-center rounded-full border border-[#888] bg-[#3a3a3a]/90 text-[16px] font-semibold">
            22
          </span>
        </button>
        <div className="mr-1.5 ml-[18px] h-[60px] w-px bg-[#777]" />
      </div>
    </div>
  );
}

/* ---------- translucent activity tracker floating over the window ---------- */
const Tracker = () => (
  <aside
    aria-label="Activity tracker"
    className="absolute top-[473px] right-0 flex w-[187px] flex-col gap-[3px] overflow-hidden bg-[#2d2d2d] pb-1.5 pl-1.5 text-[17px] font-bold whitespace-nowrap text-white opacity-80"
  >
    <button
      type="button"
      className="mt-1.5 mb-[9px] ml-auto flex h-7 w-[56px] items-center overflow-hidden bg-[#3d3d3d] pl-[3px] font-medium text-[#ddd]"
    >
      Open A
    </button>
    <div className="flex h-[41px] items-center bg-[#5fb8c4] pl-[15px]">Working Status: Act</div>
    <div className="flex h-[41px] items-center bg-[#3bce78] pl-[15px]">Active: 07:11:23</div>
    <div className="flex h-[41px] items-center bg-[#e75546] pl-[15px]">In Active: 01:34:57</div>
  </aside>
);

export default function App() {
  return (
    <div className="relative flex h-screen flex-col overflow-hidden bg-[#efefef] font-['Noto_Sans',sans-serif] leading-normal">
      <TitleBar />
      <MenuTabs />
      <Ribbon />
      <main className="mx-3 mt-[9px] flex min-h-0 grow overflow-hidden rounded-t-xl border border-b-0 border-[#c8c8c8] bg-white">
        <Folders />
        <MessageList />
        <Compose />
      </main>
      <StatusBar />
      <Taskbar />
      <Tracker />
    </div>
  );
}
